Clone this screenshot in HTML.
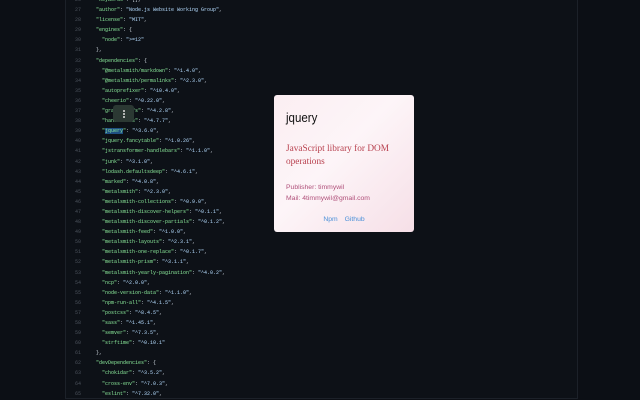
<!DOCTYPE html>
<html><head><style>
*{margin:0;padding:0;box-sizing:border-box}
body{width:640px;height:400px;overflow:hidden;background:#0c0f15;position:relative;font-family:"Liberation Mono",monospace}
.panel{position:absolute;left:65px;top:-10px;width:513px;height:409px;background:#0d1117;border-left:1px solid #1c2129;border-right:1px solid #1c2129;border-bottom:1px solid #1c2129}
.code{position:absolute;left:0;top:-5px;width:600px;font-size:5px;line-height:10.1px;color:#c9d1d9}
.l{height:10.1px;white-space:pre;position:relative}
.n{display:inline-block;width:81px;text-align:right;color:#4b525c;margin-right:15px}
.k{color:#8ae99a}.s{color:#b5dcff}
.sel{background:#1f4f82}
.kebab{position:absolute;left:113px;top:105px;width:21px;height:17px;background:#2b3833;border-radius:3px}
.kebab i{position:absolute;left:10px;width:1.5px;height:1.5px;background:#ddd;border-radius:1px}
.pop{position:absolute;left:274px;top:95px;width:140px;height:137px;border-radius:3px;background:linear-gradient(135deg,#fbeef2 0%,#fdf5f8 45%,#f6dfe7 100%);font-family:"Liberation Sans",sans-serif}
.pop h1{position:absolute;left:12px;top:16px;font-size:12.5px;font-weight:normal;color:#111;transform:scaleX(0.92);transform-origin:left}
.desc{position:absolute;left:12px;top:48px;width:125px;font-size:9.3px;line-height:13px;color:#b8404e;font-family:"Liberation Serif",serif}
.meta{position:absolute;left:12px;top:87px;font-size:6.8px;line-height:11px;color:#b0507a}
.links{position:absolute;left:0;right:0;top:121px;text-align:center;font-size:6.8px;color:#4a90d9;word-spacing:5px}
</style></head><body>
<div class="panel"></div>
<div class="code">
<div class="l"><span class="n">26</span><span class="k">"keywords"</span>: [],</div>
<div class="l"><span class="n">27</span><span class="k">"author"</span>: <span class="s">"Node.js Website Working Group"</span>,</div>
<div class="l"><span class="n">28</span><span class="k">"license"</span>: <span class="s">"MIT"</span>,</div>
<div class="l"><span class="n">29</span><span class="k">"engines"</span>: {</div>
<div class="l"><span class="n">30</span>  <span class="k">"node"</span>: <span class="s">"&gt;=12"</span></div>
<div class="l"><span class="n">31</span>},</div>
<div class="l"><span class="n">32</span><span class="k">"dependencies"</span>: {</div>
<div class="l"><span class="n">33</span>  <span class="k">"@metalsmith/markdown"</span>: <span class="s">"^1.4.0"</span>,</div>
<div class="l"><span class="n">34</span>  <span class="k">"@metalsmith/permalinks"</span>: <span class="s">"^2.3.0"</span>,</div>
<div class="l"><span class="n">35</span>  <span class="k">"autoprefixer"</span>: <span class="s">"^10.4.0"</span>,</div>
<div class="l"><span class="n">36</span>  <span class="k">"cheerio"</span>: <span class="s">"^0.22.0"</span>,</div>
<div class="l"><span class="n">37</span>  <span class="k">"graceful-fs"</span>: <span class="s">"^4.2.8"</span>,</div>
<div class="l"><span class="n">38</span>  <span class="k">"handlebars"</span>: <span class="s">"^4.7.7"</span>,</div>
<div class="l"><span class="n">39</span>  <span class="k">"<span class="sel">jquery</span>"</span>: <span class="s">"^3.6.0"</span>,</div>
<div class="l"><span class="n">40</span>  <span class="k">"jquery.fancytable"</span>: <span class="s">"^1.0.26"</span>,</div>
<div class="l"><span class="n">41</span>  <span class="k">"jstransformer-handlebars"</span>: <span class="s">"^1.1.0"</span>,</div>
<div class="l"><span class="n">42</span>  <span class="k">"junk"</span>: <span class="s">"^3.1.0"</span>,</div>
<div class="l"><span class="n">43</span>  <span class="k">"lodash.defaultsdeep"</span>: <span class="s">"^4.6.1"</span>,</div>
<div class="l"><span class="n">44</span>  <span class="k">"marked"</span>: <span class="s">"^4.0.8"</span>,</div>
<div class="l"><span class="n">45</span>  <span class="k">"metalsmith"</span>: <span class="s">"^2.3.0"</span>,</div>
<div class="l"><span class="n">46</span>  <span class="k">"metalsmith-collections"</span>: <span class="s">"^0.9.0"</span>,</div>
<div class="l"><span class="n">47</span>  <span class="k">"metalsmith-discover-helpers"</span>: <span class="s">"^0.1.1"</span>,</div>
<div class="l"><span class="n">48</span>  <span class="k">"metalsmith-discover-partials"</span>: <span class="s">"^0.1.2"</span>,</div>
<div class="l"><span class="n">49</span>  <span class="k">"metalsmith-feed"</span>: <span class="s">"^1.0.0"</span>,</div>
<div class="l"><span class="n">50</span>  <span class="k">"metalsmith-layouts"</span>: <span class="s">"^2.3.1"</span>,</div>
<div class="l"><span class="n">51</span>  <span class="k">"metalsmith-one-replace"</span>: <span class="s">"^0.1.7"</span>,</div>
<div class="l"><span class="n">52</span>  <span class="k">"metalsmith-prism"</span>: <span class="s">"^3.1.1"</span>,</div>
<div class="l"><span class="n">53</span>  <span class="k">"metalsmith-yearly-pagination"</span>: <span class="s">"^4.0.2"</span>,</div>
<div class="l"><span class="n">54</span>  <span class="k">"ncp"</span>: <span class="s">"^2.0.0"</span>,</div>
<div class="l"><span class="n">55</span>  <span class="k">"node-version-data"</span>: <span class="s">"^1.1.0"</span>,</div>
<div class="l"><span class="n">56</span>  <span class="k">"npm-run-all"</span>: <span class="s">"^4.1.5"</span>,</div>
<div class="l"><span class="n">57</span>  <span class="k">"postcss"</span>: <span class="s">"^8.4.5"</span>,</div>
<div class="l"><span class="n">58</span>  <span class="k">"sass"</span>: <span class="s">"^1.45.1"</span>,</div>
<div class="l"><span class="n">59</span>  <span class="k">"semver"</span>: <span class="s">"^7.3.5"</span>,</div>
<div class="l"><span class="n">60</span>  <span class="k">"strftime"</span>: <span class="s">"^0.10.1"</span></div>
<div class="l"><span class="n">61</span>},</div>
<div class="l"><span class="n">62</span><span class="k">"devDependencies"</span>: {</div>
<div class="l"><span class="n">63</span>  <span class="k">"chokidar"</span>: <span class="s">"^3.5.2"</span>,</div>
<div class="l"><span class="n">64</span>  <span class="k">"cross-env"</span>: <span class="s">"^7.0.3"</span>,</div>
<div class="l"><span class="n">65</span>  <span class="k">"eslint"</span>: <span class="s">"^7.32.0"</span>,</div>
</div>
<div class="kebab"><i style="top:5px"></i><i style="top:8px"></i><i style="top:11px"></i></div>
<div class="pop">
<h1>jquery</h1>
<div class="desc">JavaScript library for DOM operations</div>
<div class="meta">Publisher: timmywil<br>Mail: 4timmywil@gmail.com</div>
<div class="links">Npm Github</div>
</div>
</body></html>
